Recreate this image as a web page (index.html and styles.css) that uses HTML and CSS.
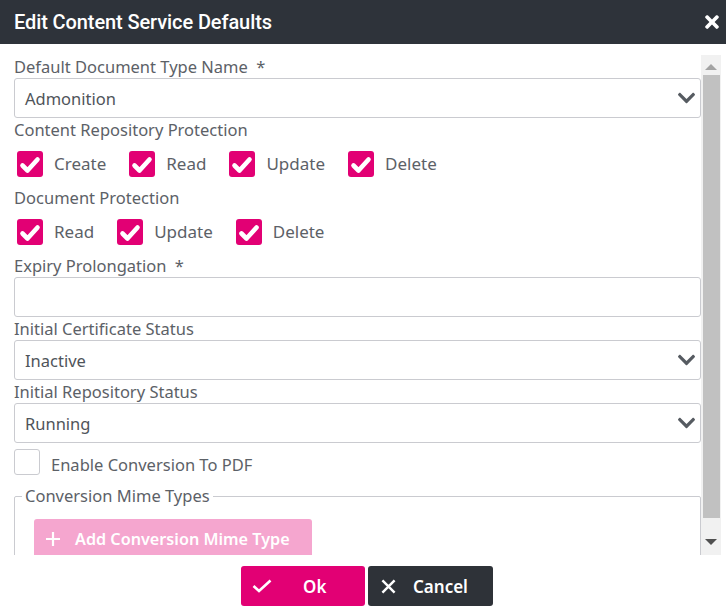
FILE: index.html
```html
<!DOCTYPE html>
<html>
<head>
<meta charset="utf-8">
<link rel="stylesheet" href="styles.css">
</head>
<body>
<div class="dialog">
  <header class="titlebar">
    <h1 class="title">Edit Content Service Defaults</h1>
    <svg class="close" viewBox="0 0 352 512" width="14" height="20"><path fill="#fff" d="M242.72 256l100.07-100.07c12.28-12.28 12.28-32.19 0-44.48l-22.24-22.24c-12.28-12.28-32.19-12.28-44.48 0L176 189.28 75.93 89.21c-12.28-12.28-32.19-12.28-44.48 0L9.21 111.45c-12.28 12.28-12.28 32.19 0 44.48L109.28 256 9.21 356.07c-12.28 12.28-12.28 32.19 0 44.48l22.24 22.24c12.28 12.28 32.2 12.28 44.48 0L176 322.72l100.07 100.07c12.28 12.28 32.2 12.28 44.48 0l22.24-22.24c12.28-12.28 12.28-32.19 0-44.48L242.72 256z"/></svg>
  </header>
  <div class="body">
    <div class="scroll">
      <div class="label">Default Document Type Name <span class="req">*</span></div>
      <div class="field select"><span>Admonition</span><svg class="chev" viewBox="0 0 448 512" width="19" height="20"><path d="M207.029 381.476L12.686 187.132c-9.373-9.373-9.373-24.569 0-33.941l22.667-22.667c9.357-9.357 24.522-9.375 33.901-.04L224 284.505l154.745-154.021c9.379-9.335 24.544-9.317 33.901.04l22.667 22.667c9.373 9.373 9.373 24.569 0 33.941L240.971 381.476c-9.373 9.372-24.569 9.372-33.942 0z"/></svg></div>

      <div class="label">Content Repository Protection</div>
      <div class="checks">
        <label class="check"><span class="box on"><svg viewBox="0 0 26 26" width="26" height="26"><polyline points="5.5,14.5 10.5,19.5 20.5,8.5"/></svg></span>Create</label>
        <label class="check"><span class="box on"><svg viewBox="0 0 26 26" width="26" height="26"><polyline points="5.5,14.5 10.5,19.5 20.5,8.5"/></svg></span>Read</label>
        <label class="check"><span class="box on"><svg viewBox="0 0 26 26" width="26" height="26"><polyline points="5.5,14.5 10.5,19.5 20.5,8.5"/></svg></span>Update</label>
        <label class="check"><span class="box on"><svg viewBox="0 0 26 26" width="26" height="26"><polyline points="5.5,14.5 10.5,19.5 20.5,8.5"/></svg></span>Delete</label>
      </div>

      <div class="label">Document Protection</div>
      <div class="checks">
        <label class="check"><span class="box on"><svg viewBox="0 0 26 26" width="26" height="26"><polyline points="5.5,14.5 10.5,19.5 20.5,8.5"/></svg></span>Read</label>
        <label class="check"><span class="box on"><svg viewBox="0 0 26 26" width="26" height="26"><polyline points="5.5,14.5 10.5,19.5 20.5,8.5"/></svg></span>Update</label>
        <label class="check"><span class="box on"><svg viewBox="0 0 26 26" width="26" height="26"><polyline points="5.5,14.5 10.5,19.5 20.5,8.5"/></svg></span>Delete</label>
      </div>

      <div class="label">Expiry Prolongation <span class="req">*</span></div>
      <div class="field"></div>

      <div class="label">Initial Certificate Status</div>
      <div class="field select"><span>Inactive</span><svg class="chev" viewBox="0 0 448 512" width="19" height="20"><path d="M207.029 381.476L12.686 187.132c-9.373-9.373-9.373-24.569 0-33.941l22.667-22.667c9.357-9.357 24.522-9.375 33.901-.04L224 284.505l154.745-154.021c9.379-9.335 24.544-9.317 33.901.04l22.667 22.667c9.373 9.373 9.373 24.569 0 33.941L240.971 381.476c-9.373 9.372-24.569 9.372-33.942 0z"/></svg></div>

      <div class="label">Initial Repository Status</div>
      <div class="field select"><span>Running</span><svg class="chev" viewBox="0 0 448 512" width="19" height="20"><path d="M207.029 381.476L12.686 187.132c-9.373-9.373-9.373-24.569 0-33.941l22.667-22.667c9.357-9.357 24.522-9.375 33.901-.04L224 284.505l154.745-154.021c9.379-9.335 24.544-9.317 33.901.04l22.667 22.667c9.373 9.373 9.373 24.569 0 33.941L240.971 381.476c-9.373 9.372-24.569 9.372-33.942 0z"/></svg></div>

      <label class="enable"><span class="box off"></span>Enable Conversion To PDF</label>

      <fieldset class="mime">
        <legend>Conversion Mime Types</legend>
        <div class="addbtn">
          <svg viewBox="0 0 16 16" width="16" height="16"><path d="M8 1v14M1 8h14" stroke="#fff" stroke-width="2.2"/></svg>
          <span>Add Conversion Mime Type</span>
        </div>
      </fieldset>
    </div>
    <div class="scrollbar">
      <div class="arrow up"></div>
      <div class="thumb"></div>
      <div class="arrow down"></div>
    </div>
  </div>
  <footer class="footer">
    <div class="btn ok">
      <svg viewBox="0 0 20 14" width="20" height="14"><polyline points="1.5,7 7,12 18.5,1.5" fill="none" stroke="#fff" stroke-width="2.6"/></svg>
      <span>Ok</span>
    </div>
    <div class="btn cancel">
      <svg viewBox="0 0 16 16" width="15" height="15"><path d="M1.5 1.5l13 13M14.5 1.5l-13 13" stroke="#fff" stroke-width="2.6"/></svg>
      <span>Cancel</span>
    </div>
  </footer>
</div>
</body>
</html>
```

FILE: styles.css
```css
html, body {
  margin: 0;
  padding: 0;
  background: #fff;
}
.dialog {
  width: 726px;
  height: 609px;
  display: flex;
  flex-direction: column;
  font-family: "Noto Sans", "Liberation Sans", sans-serif;
  color: #5c6167;
}
.titlebar {
  height: 44px;
  flex: none;
  background: #2e333a;
  display: flex;
  align-items: center;
  justify-content: space-between;
  padding: 0 7px 0 14px;
}
.title {
  margin: 0;
  font-family: Roboto, "Liberation Sans", sans-serif;
  font-weight: 500;
  font-size: 20px;
  color: #fff;
  letter-spacing: -0.1px;
}
.close { display: block; }
.body {
  flex: none;
  height: 500px;
  margin-top: 11px;
  display: flex;
  padding-right: 5px;
}
.scroll {
  flex: 1;
  overflow: hidden;
  padding-left: 14px;
  display: flex;
  flex-direction: column;
}
.label {
  height: 23px;
  line-height: 23px;
  font-size: 16.5px;
  flex: none;
}
.req { margin-left: 4px; }
.field {
  height: 38px;
  flex: none;
  border: 1px solid #cacbd0;
  border-radius: 3px;
  box-sizing: content-box;
  display: flex;
  align-items: center;
  justify-content: space-between;
  padding: 0 4px 0 10px;
  font-size: 16.5px;
  color: #4f545a;
}
.chev { fill: #565b61; display: block; }
.checks {
  height: 45px;
  flex: none;
  display: flex;
  align-items: center;
  padding-left: 3px;
  gap: 23px;
}
.check {
  display: flex;
  align-items: center;
  gap: 11px;
  font-size: 17px;
}
.box {
  width: 26px;
  height: 26px;
  border-radius: 3px;
  box-sizing: border-box;
  flex: none;
}
.box.on { background: #e20074; }
.box.on svg { display: block; }
.box.on polyline {
  fill: none;
  stroke: #fff;
  stroke-width: 4.6;
  stroke-linecap: round;
  stroke-linejoin: round;
}
.box.off {
  border: 1px solid #cacbd0;
  background: #fff;
}
.enable {
  margin-top: 6px;
  height: 26px;
  flex: none;
  display: flex;
  gap: 11px;
  font-size: 16.5px;
  padding-top: 4px;
  align-items: flex-start;
}
.enable .box { margin-top: -4px; }
.mime {
  margin: 6px 0 0 0;
  padding: 0 0 20px 7px;
  border: 1px solid #cacbd0;
  border-radius: 2px;
  flex: none;
}
.mime legend {
  padding: 0 3px;
  font-size: 16.5px;
  line-height: 22px;
  color: #5c6167;
}
.addbtn {
  margin: 12px 0 0 12px;
  width: 278px;
  height: 40px;
  background: #f5a6cf;
  border-radius: 3px;
  display: flex;
  align-items: center;
  padding-left: 11px;
  box-sizing: border-box;
  gap: 14px;
  color: #fff;
  font-weight: 600;
  font-size: 16.2px;
}
.addbtn svg { display: block; }
.scrollbar {
  width: 20px;
  flex: none;
  background: #f1f1f1;
  display: flex;
  flex-direction: column;
  align-items: center;
}
.arrow {
  width: 0;
  height: 0;
  flex: none;
}
.arrow.up {
  margin-top: 9px;
  border-left: 6px solid transparent;
  border-right: 6px solid transparent;
  border-bottom: 6px solid #a3a3a3;
}
.thumb {
  margin-top: 5px;
  width: 17px;
  height: 443px;
  background: #c1c1c1;
  align-self: flex-end;
  margin-right: 1px;
}
.arrow.down {
  margin-top: 21px;
  border-left: 6px solid transparent;
  border-right: 6px solid transparent;
  border-top: 6px solid #505050;
}
.footer {
  flex: 1;
  display: flex;
  justify-content: center;
  align-items: flex-start;
  padding-top: 11px;
  padding-left: 8px;
  gap: 3px;
}
.btn {
  height: 40px;
  border-radius: 3px;
  display: flex;
  align-items: center;
  color: #fff;
  font-size: 17px;
  font-weight: 600;
  box-sizing: border-box;
}
.btn svg { display: block; }
.ok {
  width: 124px;
  background: #e20074;
  padding-left: 11px;
  gap: 31px;
}
.cancel {
  width: 125px;
  background: #2e3238;
  padding-left: 13px;
  gap: 17px;
}
```
